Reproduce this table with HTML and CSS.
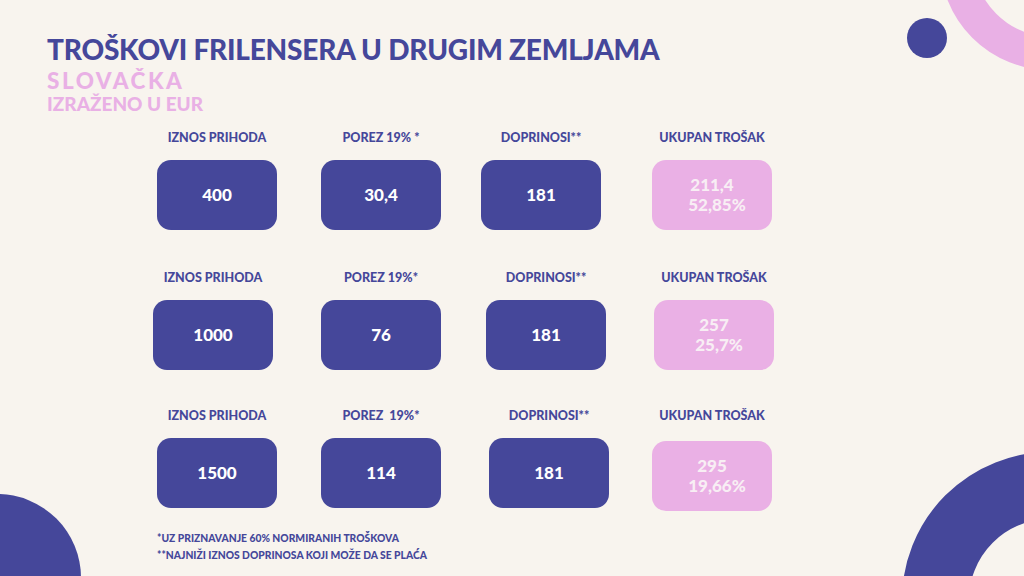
FILE: index.html
```html
<!DOCTYPE html>
<html lang="sr">
<head>
<meta charset="utf-8">
<title>Troškovi frilensera u drugim zemljama</title>
<link rel="stylesheet" href="styles.css">
</head>
<body>
<div class="slide">
  <div class="deco ring-top"></div>
  <div class="deco dot"></div>
  <div class="deco blob-left"></div>
  <div class="deco ring-bottom"></div>

  <header class="head">
    <h1 class="title">TROŠKOVI FRILENSERA U DRUGIM ZEMLJAMA</h1>
    <p class="country">SLOVAČKA</p>
    <p class="currency">IZRAŽENO U EUR</p>
  </header>

  <section class="table">
    <div class="row row-1">
      <div class="cell"><div class="label">IZNOS PRIHODA</div><div class="card">400</div></div>
      <div class="cell"><div class="label">POREZ 19% *</div><div class="card">30,4</div></div>
      <div class="cell"><div class="label">DOPRINOSI**</div><div class="card">181</div></div>
      <div class="cell"><div class="label">UKUPAN TROŠAK</div><div class="card card-total"><span>211,4</span><span class="pct">52,85%</span></div></div>
    </div>
    <div class="row row-2">
      <div class="cell"><div class="label">IZNOS PRIHODA</div><div class="card">1000</div></div>
      <div class="cell"><div class="label">POREZ 19%*</div><div class="card">76</div></div>
      <div class="cell"><div class="label">DOPRINOSI**</div><div class="card">181</div></div>
      <div class="cell"><div class="label">UKUPAN TROŠAK</div><div class="card card-total"><span>257</span><span class="pct">25,7%</span></div></div>
    </div>
    <div class="row row-3">
      <div class="cell"><div class="label">IZNOS PRIHODA</div><div class="card">1500</div></div>
      <div class="cell"><div class="label">POREZ&nbsp; 19%*</div><div class="card">114</div></div>
      <div class="cell"><div class="label">DOPRINOSI**</div><div class="card">181</div></div>
      <div class="cell"><div class="label">UKUPAN TROŠAK</div><div class="card card-total card-low"><span>295</span><span class="pct">19,66%</span></div></div>
    </div>
  </section>

  <footer class="notes">
    <p>*UZ PRIZNAVANJE 60% NORMIRANIH TROŠKOVA</p>
    <p>**NAJNIŽI IZNOS DOPRINOSA KOJI MOŽE DA SE PLAĆA</p>
  </footer>
</div>
</body>
</html>
```

FILE: styles.css
```css
* { box-sizing: border-box; }

html, body {
  margin: 0;
  padding: 0;
}

body {
  background: #f8f4ee;
  font-family: Lato, "Open Sans", sans-serif;
  font-weight: 700;
}

.slide {
  position: relative;
  width: 1024px;
  height: 576px;
  overflow: hidden;
  background: #f8f4ee;
  color: #45479a;
}

/* decorative shapes on the canvas */
.deco {
  position: absolute;
  border-radius: 50%;
}
.ring-top {
  left: 940px;
  top: -150px;
  width: 220px;
  height: 220px;
  border: 34px solid #e9b0e5;
}
.dot {
  left: 907px;
  top: 18px;
  width: 40px;
  height: 40px;
  background: #45479a;
}
.blob-left {
  left: -87px;
  top: 494px;
  width: 168px;
  height: 168px;
  background: #45479a;
}
.ring-bottom {
  left: 902px;
  top: 452px;
  width: 296px;
  height: 296px;
  border: 67px solid #45479a;
}

/* header */
.head {
  padding: 35px 0 0 47px;
}
.title {
  margin: 0;
  font-size: 28px;
  line-height: 28px;
  font-weight: 900;
  letter-spacing: -0.2px;
  color: #45479a;
}
.country {
  margin: 9px 0 0;
  font-size: 22.5px;
  line-height: 18px;
  font-weight: 900;
  letter-spacing: 2.5px;
  color: #e9b0e5;
}
.currency {
  margin: 6px 0 0;
  font-size: 19px;
  line-height: 16px;
  font-weight: 900;
  color: #e9b0e5;
}

/* table of values */
.table {
  margin-top: 20px;
  display: flex;
  flex-direction: column;
  gap: 40px;
}
.row {
  display: grid;
}
.row-1 { padding-left: 157px; grid-template-columns: 164px 160px 171px 120px; }
.row-2 { padding-left: 153px; grid-template-columns: 168px 165px 168px 120px; margin-top: 2px; }
.row-3 { padding-left: 157px; grid-template-columns: 164px 168px 163px 120px; }

.cell {
  width: 120px;
  display: flex;
  flex-direction: column;
  align-items: center;
}
.label {
  font-size: 12.5px;
  line-height: 12px;
  font-weight: 900;
  white-space: nowrap;
  color: #45479a;
}
.card {
  margin-top: 16px;
  width: 120px;
  height: 70px;
  border-radius: 14px;
  background: #45479a;
  color: #ffffff;
  font-size: 17px;
  font-weight: 900;
  display: flex;
  flex-direction: column;
  align-items: center;
  justify-content: center;
  line-height: 20px;
}
.card-total {
  background: #eab0e5;
  color: #f8eef4;
}
.card-total .pct {
  padding-left: 10px;
}
.card-low {
  margin-top: 19px;
}

/* footnotes */
.notes {
  margin-top: 19px;
  padding-left: 157px;
}
.notes p {
  margin: 0;
  font-size: 10.3px;
  line-height: 16.5px;
  font-weight: 900;
  color: #45479a;
}
```
